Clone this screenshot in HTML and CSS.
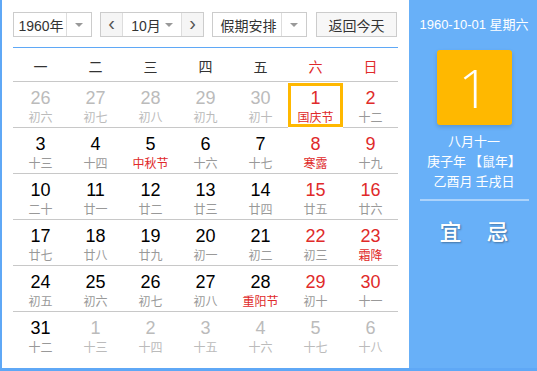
FILE: index.html
```html
<!DOCTYPE html>
<html>

<head>
  <title>万年历</title>
  <link rel="stylesheet" href="styles.css">
</head>

<body>
  <div class="calendar">
    <div class="main">
      <div class="toolbar">
        <div class="select year">
          <span class="select-text">1960年</span>
          <span class="select-arrow"></span>
        </div>
        <div class="month-group">
          <span class="nav">&lsaquo;</span>
          <div class="select month">
            <span class="select-text">10月</span>
            <span class="select-arrow plain"></span>
          </div>
          <span class="nav">&rsaquo;</span>
        </div>
        <div class="select holiday">
          <span class="select-text">假期安排</span>
          <span class="select-arrow"></span>
        </div>
        <button class="today">返回今天</button>
      </div>

      <div class="weekdays">
        <span>一</span><span>二</span><span>三</span><span>四</span><span>五</span>
        <span class="weekend">六</span><span class="weekend">日</span>
      </div>

      <div class="days" id="days"></div>
    </div>

    <div class="side">
      <div class="side-date">1960-10-01 星期六</div>
      <div class="big-day">1</div>
      <div class="lunar-info">
        <p>八月十一</p>
        <p>庚子年 【鼠年】</p>
        <p>乙酉月 壬戌日</p>
      </div>
      <div class="yi-ji">
        <span>宜</span>
        <span>忌</span>
      </div>
    </div>
  </div>

  <script>
    // day, lunar text, flags: o = other month, w = weekend, f = festival/term, s = selected
    const days = [
      ['26', '初六', 'o'], ['27', '初七', 'o'], ['28', '初八', 'o'], ['29', '初九', 'o'], ['30', '初十', 'o'], ['1', '国庆节', 'wfs'], ['2', '十二', 'w'],
      ['3', '十三', ''], ['4', '十四', ''], ['5', '中秋节', 'f'], ['6', '十六', ''], ['7', '十七', ''], ['8', '寒露', 'wf'], ['9', '十九', 'w'],
      ['10', '二十', ''], ['11', '廿一', ''], ['12', '廿二', ''], ['13', '廿三', ''], ['14', '廿四', ''], ['15', '廿五', 'w'], ['16', '廿六', 'w'],
      ['17', '廿七', ''], ['18', '廿八', ''], ['19', '廿九', ''], ['20', '初一', ''], ['21', '初二', ''], ['22', '初三', 'w'], ['23', '霜降', 'wf'],
      ['24', '初五', ''], ['25', '初六', ''], ['26', '初七', ''], ['27', '初八', ''], ['28', '重阳节', 'f'], ['29', '初十', 'w'], ['30', '十一', 'w'],
      ['31', '十二', ''], ['1', '十三', 'o'], ['2', '十四', 'o'], ['3', '十五', 'o'], ['4', '十六', 'o'], ['5', '十七', 'o'], ['6', '十八', 'o']
    ];

    const container = document.getElementById('days');
    let html = '';
    days.forEach(function (d) {
      let cls = 'day';
      if (d[2].includes('o')) cls += ' other';
      if (d[2].includes('w')) cls += ' weekend';
      if (d[2].includes('f')) cls += ' festival';
      if (d[2].includes('s')) cls += ' selected';
      html += '<div class="' + cls + '"><span class="num">' + d[0] + '</span><span class="lunar">' + d[1] + '</span></div>';
    });
    container.innerHTML = html;
  </script>
</body>

</html>
```

FILE: styles.css
```css
body {
  margin: 0;
  padding: 0;
  background-color: #5fa8f6;
  font-family: "Liberation Sans", "Noto Sans CJK SC", sans-serif;
  width: 537px;
  height: 371px;
  overflow: hidden;
}

.calendar {
  display: flex;
  height: 368px;
  margin-left: 2px;
}

.main {
  width: 396px;
  background-color: #fff;
  padding: 12px 0 0 11px;
}

.toolbar {
  display: flex;
  height: 25px;
  width: 385px;
}

.select {
  display: flex;
  border: 1px solid #ccc;
  box-sizing: border-box;
  height: 25px;
  background-color: #fff;
  font-size: 14px;
  color: #333;
}

.select-text {
  flex: 1;
  display: flex;
  align-items: center;
  justify-content: center;
  border-right: 1px solid #ddd;
}

.select-arrow {
  width: 24px;
  position: relative;
}

.select-arrow::after {
  content: "";
  position: absolute;
  left: 8px;
  top: 10px;
  border-left: 4px solid transparent;
  border-right: 4px solid transparent;
  border-top: 4px solid #999;
}

.select-arrow.plain {
  width: 20px;
}

.select-arrow.plain::after {
  left: 4px;
}

.month .select-text {
  border-right: none;
  padding-left: 8px;
}

.year {
  width: 79px;
}

.year .select-text {
  padding-left: 2px;
}

.month-group {
  display: flex;
  margin-left: 8px;
  width: 104px;
  height: 25px;
  border: 1px solid #ccc;
  box-sizing: border-box;
}

.month-group .month {
  border: none;
  border-left: 1px solid #ddd;
  border-right: 1px solid #ddd;
  height: 23px;
  flex: 1;
}

.nav {
  width: 21px;
  background-color: #f5f5f5;
  color: #555;
  font-size: 20px;
  line-height: 21px;
  text-align: center;
}

.holiday {
  width: 95px;
  margin-left: 8px;
}

.holiday .select-text {
  padding-left: 3px;
}

.today {
  margin-left: 9px;
  width: 81px;
  height: 25px;
  border: 1px solid #ccc;
  background-color: #f7f7f7;
  font-family: "Liberation Sans", "Noto Sans CJK SC", sans-serif;
  font-size: 14px;
  color: #333;
  padding: 0;
}

.weekdays {
  display: grid;
  grid-template-columns: repeat(7, 55px);
  margin-top: 10px;
  border-top: 1px solid #5fa8f6;
  border-bottom: 1px solid #c8c8c8;
  height: 33px;
  width: 385px;
  font-size: 14px;
  color: #333;
}

.weekdays span {
  display: flex;
  align-items: center;
  justify-content: center;
  padding-top: 2px;
}

.weekdays .weekend {
  color: #e02a2a;
}

.days {
  display: grid;
  grid-template-columns: repeat(7, 55px);
  width: 385px;
}

.day {
  border-bottom: 1px solid #c8c8c8;
  display: flex;
  flex-direction: column;
  align-items: center;
  padding-top: 5px;
  box-sizing: border-box;
  height: 46px;
}

.days .day:nth-last-child(-n+7) {
  border-bottom: none;
}

.num {
  font-size: 18px;
  line-height: 22px;
  color: #000;
}

.lunar {
  font-size: 12px;
  line-height: 16px;
  color: #999;
  font-family: "Noto Sans CJK SC", sans-serif;
}

.weekend .num {
  color: #e02a2a;
}

.festival .lunar {
  color: #e02a2a;
}

.other .num,
.other .lunar {
  color: #bbb;
}

.selected {
  box-shadow: inset 0 0 0 3px #ffb800;
  height: 44px;
  margin-top: 1px;
  padding-top: 4px;
  border-bottom: none;
  margin-bottom: 1px;
}

.side {
  flex: 1;
  margin-left: 0;
  padding-left: 2px;
  background-color: #68b0f8;
  color: #fff;
  display: flex;
  flex-direction: column;
  align-items: center;
  font-family: "Noto Sans CJK SC", sans-serif;
}

.side-date {
  margin-top: 16px;
  font-size: 13px;
  line-height: 18px;
  font-family: "Liberation Sans", "Noto Sans CJK SC", sans-serif;
}

.big-day {
  margin-top: 16px;
  width: 75px;
  height: 75px;
  background-color: #ffb800;
  border-radius: 3px;
  box-shadow: 0 2px 4px rgba(0, 0, 0, 0.15);
  font-family: "Open Sans", sans-serif;
  font-weight: 300;
  font-size: 54px;
  line-height: 75px;
  text-align: center;
}

.lunar-info {
  margin-top: 6px;
  text-align: center;
  font-size: 13px;
  width: 109px;
  padding-bottom: 8px;
  border-bottom: 2px solid rgba(255, 255, 255, 0.45);
}

.lunar-info p {
  margin: 0;
  line-height: 20px;
}

.yi-ji {
  display: flex;
  gap: 25px;
  margin-top: 13px;
  font-size: 22px;
  font-weight: 500;
  text-shadow: 1px 1px 2px rgba(0, 0, 0, 0.35);
}
```
